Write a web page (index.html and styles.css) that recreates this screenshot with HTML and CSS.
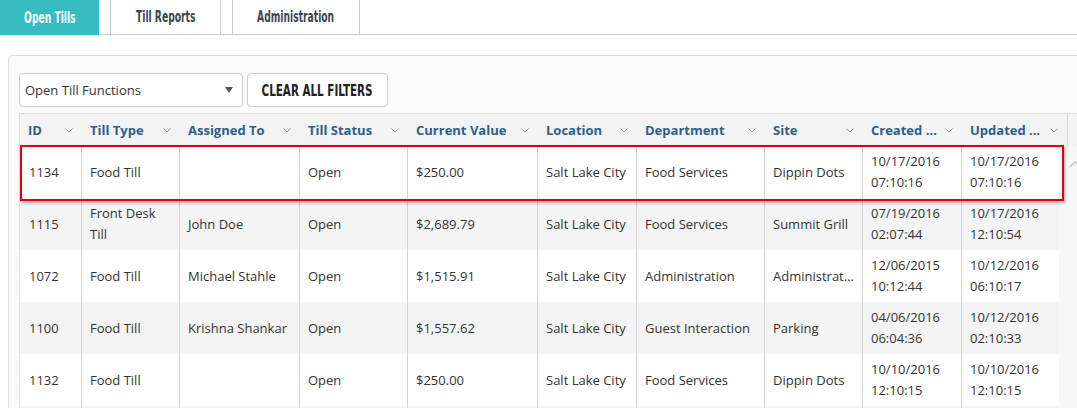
FILE: index.html
```html
<!DOCTYPE html>
<html lang="en">
<head>
    <meta charset="UTF-8">
    <meta name="viewport" content="width=device-width, initial-scale=1.0">
    <title>Open Tills</title>
    <link rel="stylesheet" href="styles.css">
</head>
<body>
    <div class="tabs">
        <a class="tab active"><span class="squeeze">Open Tills</span></a>
        <a class="tab"><span class="squeeze">Till Reports</span></a>
        <a class="tab"><span class="squeeze">Administration</span></a>
    </div>

    <div class="panel">
        <div class="toolbar">
            <div class="dropdown">
                <span>Open Till Functions</span>
                <span class="caret"></span>
            </div>
            <button class="clear-btn"><span class="squeeze">CLEAR ALL FILTERS</span></button>
        </div>

        <div class="grid">
            <div class="grid-head">
                <div class="th"><span class="th-label">ID</span><svg class="sort" viewBox="0 0 8 5"><polyline points="0.5,0.5 4,4 7.5,0.5"/></svg></div>
                <div class="th"><span class="th-label">Till Type</span><svg class="sort" viewBox="0 0 8 5"><polyline points="0.5,0.5 4,4 7.5,0.5"/></svg></div>
                <div class="th"><span class="th-label">Assigned To</span><svg class="sort" viewBox="0 0 8 5"><polyline points="0.5,0.5 4,4 7.5,0.5"/></svg></div>
                <div class="th"><span class="th-label">Till Status</span><svg class="sort" viewBox="0 0 8 5"><polyline points="0.5,0.5 4,4 7.5,0.5"/></svg></div>
                <div class="th"><span class="th-label">Current Value</span><svg class="sort" viewBox="0 0 8 5"><polyline points="0.5,0.5 4,4 7.5,0.5"/></svg></div>
                <div class="th"><span class="th-label">Location</span><svg class="sort" viewBox="0 0 8 5"><polyline points="0.5,0.5 4,4 7.5,0.5"/></svg></div>
                <div class="th"><span class="th-label">Department</span><svg class="sort" viewBox="0 0 8 5"><polyline points="0.5,0.5 4,4 7.5,0.5"/></svg></div>
                <div class="th"><span class="th-label">Site</span><svg class="sort" viewBox="0 0 8 5"><polyline points="0.5,0.5 4,4 7.5,0.5"/></svg></div>
                <div class="th"><span class="th-label">Created Date</span><svg class="sort" viewBox="0 0 8 5"><polyline points="0.5,0.5 4,4 7.5,0.5"/></svg></div>
                <div class="th"><span class="th-label">Updated Date</span><svg class="sort" viewBox="0 0 8 5"><polyline points="0.5,0.5 4,4 7.5,0.5"/></svg></div>
                <div class="th-fill"></div>
            </div>

            <div class="grid-body">
                <div class="rows">
                    <div class="tr selected">
                        <div class="td">1134</div>
                        <div class="td">Food Till</div>
                        <div class="td"></div>
                        <div class="td">Open</div>
                        <div class="td">$250.00</div>
                        <div class="td">Salt Lake City</div>
                        <div class="td">Food Services</div>
                        <div class="td">Dippin Dots</div>
                        <div class="td">10/17/2016 07:10:16</div>
                        <div class="td">10/17/2016 07:10:16</div>
                    </div>
                    <div class="tr">
                        <div class="td">1115</div>
                        <div class="td">Front Desk Till</div>
                        <div class="td">John Doe</div>
                        <div class="td">Open</div>
                        <div class="td">$2,689.79</div>
                        <div class="td">Salt Lake City</div>
                        <div class="td">Food Services</div>
                        <div class="td">Summit Grill</div>
                        <div class="td">07/19/2016 02:07:44</div>
                        <div class="td">10/17/2016 12:10:54</div>
                    </div>
                    <div class="tr">
                        <div class="td">1072</div>
                        <div class="td">Food Till</div>
                        <div class="td">Michael Stahle</div>
                        <div class="td">Open</div>
                        <div class="td">$1,515.91</div>
                        <div class="td">Salt Lake City</div>
                        <div class="td">Administration</div>
                        <div class="td"><span class="clip">Administration</span></div>
                        <div class="td">12/06/2015 10:12:44</div>
                        <div class="td">10/12/2016 06:10:17</div>
                    </div>
                    <div class="tr">
                        <div class="td">1100</div>
                        <div class="td">Food Till</div>
                        <div class="td">Krishna Shankar</div>
                        <div class="td">Open</div>
                        <div class="td">$1,557.62</div>
                        <div class="td">Salt Lake City</div>
                        <div class="td">Guest Interaction</div>
                        <div class="td">Parking</div>
                        <div class="td">04/06/2016 06:04:36</div>
                        <div class="td">10/12/2016 02:10:33</div>
                    </div>
                    <div class="tr">
                        <div class="td">1132</div>
                        <div class="td">Food Till</div>
                        <div class="td"></div>
                        <div class="td">Open</div>
                        <div class="td">$250.00</div>
                        <div class="td">Salt Lake City</div>
                        <div class="td">Food Services</div>
                        <div class="td">Dippin Dots</div>
                        <div class="td">10/10/2016 12:10:15</div>
                        <div class="td">10/10/2016 12:10:15</div>
                    </div>
                    <div class="tr">
                        <div class="td">1128</div>
                        <div class="td">Food Till</div>
                        <div class="td"></div>
                        <div class="td">Open</div>
                        <div class="td">$250.00</div>
                        <div class="td">Salt Lake City</div>
                        <div class="td">Food Services</div>
                        <div class="td">Dippin Dots</div>
                        <div class="td">10/08/2016 09:41:02</div>
                        <div class="td">10/08/2016 09:41:02</div>
                    </div>
                </div>
                <div class="vscroll">
                    <svg class="scroll-up" viewBox="0 0 12 7"><polyline points="1,6 6,1 11,6"/></svg>
                </div>
            </div>
        </div>
    </div>
</body>
</html>
```

FILE: styles.css
```css
html, body {
    height: 100%;
}
body {
    margin: 0;
    font-family: "Open Sans", "Liberation Sans", sans-serif;
    font-size: 13px;
    color: #333;
    background-color: #fff;
    overflow: hidden;
}

/* condensed display type for tabs and buttons */
.squeeze {
    display: inline-block;
    font-family: "DejaVu Sans Condensed", "DejaVu Sans", sans-serif;
    font-weight: bold;
    font-size: 15px;
    transform: scaleX(0.68);
    white-space: nowrap;
}

/* tabs */
.tabs {
    display: flex;
    gap: 11px;
    height: 34px;
    border-bottom: 1px solid #ccc;
}
.tab {
    display: flex;
    align-items: center;
    justify-content: center;
    height: 34px;
    color: #3d4451;
    box-sizing: border-box;
    border-left: 1px solid #ccc;
    border-right: 1px solid #ccc;
    cursor: pointer;
}
.tab:nth-child(2) {
    width: 111px;
}
.tab:nth-child(3) {
    width: 128px;
}
.tab.active {
    width: 99px;
    height: 35px;
    background-color: #36bcc1;
    color: #fff;
    border: none;
}

/* panel */
.panel {
    margin: 20px 0 0 8px;
    width: 1100px;
    border: 1px solid #ddd;
    border-radius: 4px;
    background-color: #fafafa;
    padding: 17px 0 0 10px;
}
.toolbar {
    display: flex;
    gap: 4px;
    height: 34px;
}
.dropdown {
    width: 224px;
    box-sizing: border-box;
    border: 1px solid #ccc;
    border-radius: 4px;
    background-color: #fff;
    display: flex;
    align-items: center;
    justify-content: space-between;
    padding: 0 9px 0 5px;
    color: #333;
}
.caret {
    width: 0;
    height: 0;
    border-left: 4px solid transparent;
    border-right: 4px solid transparent;
    border-top: 6px solid #555;
}
.clear-btn {
    width: 141px;
    box-sizing: border-box;
    border: 1px solid #ccc;
    border-radius: 4px;
    background-color: #fff;
    color: #222;
    padding: 0;
    cursor: pointer;
}
.clear-btn .squeeze {
    font-size: 16px;
    transform: scaleX(0.72);
    margin: 0 -20px;
}

/* grid */
.grid {
    margin-top: 6px;
    border-left: 1px solid #e2e2e2;
}
.grid-head {
    display: grid;
    grid-template-columns: 62px 98px 120px 108px 130px 99px 128px 98px 99px 105px 60px;
    height: 32px;
    border-top: 1px solid #ddd;
    background-color: #f3f3f3;
}
.th {
    display: flex;
    align-items: center;
    justify-content: space-between;
    padding: 0 9px 0 8px;
    min-width: 0;
    font-weight: bold;
    color: #2d5f88;
}
.th-label {
    white-space: nowrap;
    overflow: hidden;
    text-overflow: ellipsis;
    min-width: 0;
}
.sort {
    width: 8px;
    height: 5px;
    flex-shrink: 0;
    margin-left: 8px;
    fill: none;
    stroke: #9a9a9a;
    stroke-width: 1;
}
.th-fill {
    border-left: 1px solid #d6d6d6;
}

.grid-body {
    display: flex;
}
.rows {
    width: 1039px;
}
.tr {
    display: grid;
    grid-template-columns: 62px 98px 120px 108px 130px 99px 128px 98px 99px 97px;
    height: 52px;
    background-color: #fff;
}
.tr:nth-child(even) {
    background-color: #f4f4f4;
}
.td {
    display: flex;
    align-items: center;
    padding: 0 8px;
    line-height: 21px;
    border-right: 1px solid #d3d3d3;
    min-width: 0;
}
.td:first-child {
    padding-left: 9px;
}
.td:last-child {
    border-right: none;
}
.clip {
    white-space: nowrap;
    overflow: hidden;
    text-overflow: ellipsis;
    min-width: 0;
}
.tr.selected {
    position: relative;
}
.tr.selected::after {
    content: "";
    position: absolute;
    top: -1px;
    left: 0;
    right: -5px;
    bottom: -3px;
    border: 2px solid #e3000f;
    box-shadow: 1px 2px 3px rgba(0, 0, 0, 0.3);
    pointer-events: none;
}
.vscroll {
    flex: 1;
    background-color: #f7f7f7;
    padding: 15px 0 0 10px;
}
.scroll-up {
    width: 12px;
    height: 7px;
    display: block;
    fill: none;
    stroke: #cfcfcf;
    stroke-width: 2;
}
```
